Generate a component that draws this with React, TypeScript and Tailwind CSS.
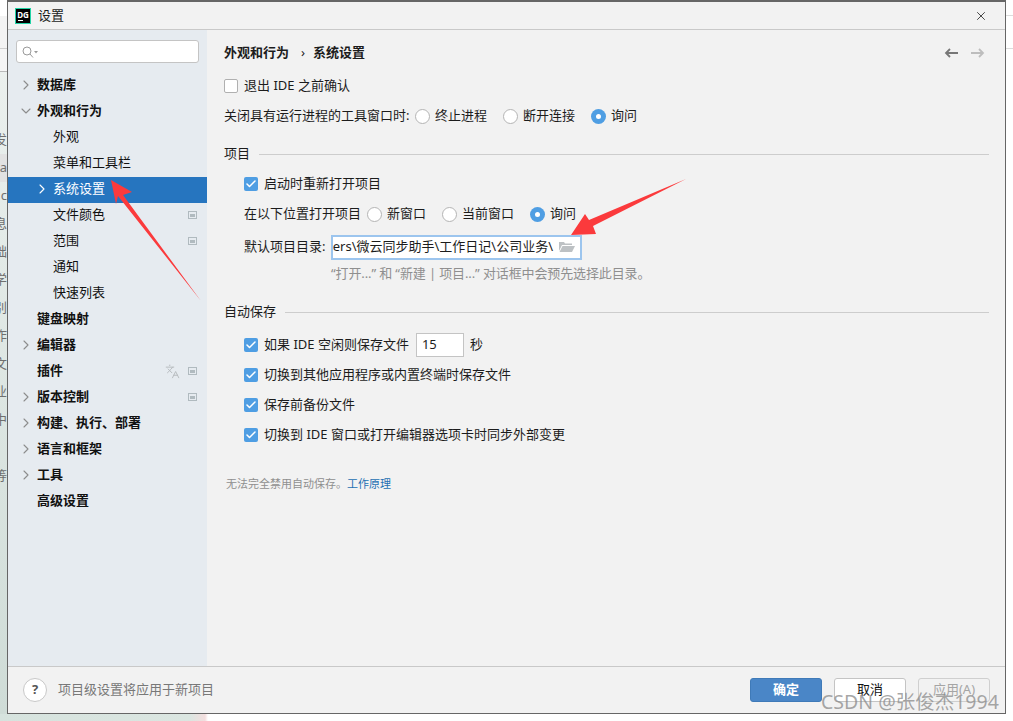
import { Check, ChevronDown, ChevronRight, Languages, X } from "lucide-react";

const stripChars = ["发", "ta", "c", "息", "础", "学", "别", "作", "文", "业", "中", "", "等"];

const tree = [
  { label: "数据库", root: true, arrow: "right" },
  { label: "外观和行为", root: true, arrow: "down" },
  { label: "外观" },
  { label: "菜单和工具栏" },
  { label: "系统设置", selected: true, arrow: "right" },
  { label: "文件颜色", scope: true },
  { label: "范围", scope: true },
  { label: "通知" },
  { label: "快速列表" },
  { label: "键盘映射", root: true },
  { label: "编辑器", root: true, arrow: "right" },
  { label: "插件", root: true, scope: true, lang: true },
  { label: "版本控制", root: true, arrow: "right", scope: true },
  { label: "构建、执行、部署", root: true, arrow: "right" },
  { label: "语言和框架", root: true, arrow: "right" },
  { label: "工具", root: true, arrow: "right" },
  { label: "高级设置", root: true },
];

function TreeRow({ item }: { item: (typeof tree)[number] }) {
  const iconColor = item.selected ? "text-white" : "text-[#8c8c8c]";
  return (
    <div className={`relative flex h-[26px] items-center ${item.selected ? "bg-[#2675bf] text-white" : "text-[#111]"}`}>
      {item.arrow && (
        <span className={`absolute top-[4px] ${item.root ? "left-[10px]" : "left-[26px]"} ${iconColor}`}>
          {item.arrow === "down" ? <ChevronDown size={16} strokeWidth={1.6} /> : <ChevronRight size={16} strokeWidth={1.6} />}
        </span>
      )}
      <span className={item.root ? "ml-[29px] pb-[2px] font-bold" : "ml-[45px] pb-[2px]"}>{item.label}</span>
      {item.lang && <Languages size={15} strokeWidth={1.5} className="absolute left-[157px] top-[5px] text-[#b5babd]" />}
      {item.scope && (
        <span className="absolute left-[180px] top-[8px] flex h-[8px] w-[9px] items-center justify-center border border-[#b0babf]">
          <span className="h-[3px] w-[5px] bg-[#b0babf]" />
        </span>
      )}
    </div>
  );
}

function Box({ checked }: { checked?: boolean }) {
  return checked ? (
    <span className="flex h-[14px] w-[14px] shrink-0 items-center justify-center rounded-[2px] bg-[#4f9ee3]">
      <Check size={12} strokeWidth={3} className="text-white" />
    </span>
  ) : (
    <span className="h-[14px] w-[14px] shrink-0 rounded-[2px] border border-[#b0b0b0] bg-white" />
  );
}

function Radio({ label, on, className }: { label: string; on?: boolean; className?: string }) {
  return (
    <span className={`flex items-center gap-[5px] ${className ?? ""}`}>
      {on ? (
        <span className="flex h-[15px] w-[15px] items-center justify-center rounded-full bg-[#4f9ee3]">
          <span className="h-[5px] w-[5px] rounded-full bg-white" />
        </span>
      ) : (
        <span className="h-[15px] w-[15px] rounded-full border border-[#b4b4b4] bg-white" />
      )}
      {label}
    </span>
  );
}

function Section({ title }: { title: string }) {
  return (
    <div className="flex h-[30px] items-center gap-[9px]">
      <span>{title}</span>
      <span className="h-px flex-1 bg-[#cdcdcd]" />
    </div>
  );
}

function CheckRow({ label, checked }: { label: string; checked?: boolean }) {
  return (
    <div className="flex h-[30px] items-center gap-[6px] pl-[20px]">
      <Box checked={checked} />
      <span>{label}</span>
    </div>
  );
}

export default function App() {
  return (
    <div className="relative flex h-[721px] w-[1013px] flex-col overflow-hidden bg-white font-['Noto_Sans','Noto_Sans_CJK_SC',sans-serif] text-[13px] text-[#1c1c1c]">
      <div className="flex h-[714px]">
        {/* behind the dialog, left */}
        <div className="flex w-[7px] shrink-0 flex-col overflow-hidden bg-gradient-to-b from-[#eef2f0] to-[#cfdcd7] text-[#6f6f6f]">
          <div className="h-[16px] bg-white" />
          <div className="h-[33px] border-b border-[#cfcfcf] bg-[#f3f3f3]" />
          <div className="h-[23px] border-b border-[#b9b9b9] bg-[#f5f5f5]" />
          <div className="h-[54px]" />
          {stripChars.map((c, i) => (
            <div key={i} className={`flex h-[28px] items-center justify-end whitespace-nowrap ${i === 1 ? "bg-[#e2e2e2]" : ""}`}>
              {c}
            </div>
          ))}
        </div>

        {/* dialog */}
        <div className="flex w-[999px] shrink-0 flex-col border border-t-2 border-[#666] bg-[#f2f2f2]">
          <div className="flex h-[28px] shrink-0 items-center border-b border-[#c9c9c9] pl-[7px] pr-[17px]">
            <span className="flex h-[16px] w-[16px] flex-col items-center border border-[#22d3a5] bg-black pt-px text-[8px] font-bold leading-[9px] text-white">
              DG
              <span className="ml-[-5px] mt-px h-px w-[5px] bg-white" />
            </span>
            <span className="ml-[7px] flex-1">设置</span>
            <X size={14} strokeWidth={1.4} className="text-[#222]" />
          </div>

          <div className="flex min-h-0 flex-1">
            <div className="w-[199px] shrink-0 bg-[#e6ebf0]">
              <div className="mx-[8px] mt-[10px] mb-[10px] flex h-[23px] items-center rounded-[3px] border border-[#c4c4c4] bg-white pl-[5px]">
                <svg width="16" height="12" viewBox="0 0 16 12" fill="none">
                  <circle cx="5" cy="5" r="4" stroke="#9a9a9a" />
                  <path d="M8 8l3 3.5" stroke="#9a9a9a" />
                  <path d="M12 5h4l-2 2.500z" fill="#9a9a9a" />
                </svg>
              </div>
              {tree.map((item) => (
                <TreeRow key={item.label} item={item} />
              ))}
            </div>

            <div className="flex-1 pl-[17px] pr-[16px] pt-[12px]">
              <div className="flex h-[22px] items-center font-bold">
                <span>外观和行为</span>
                <span className="ml-[12px] mr-[8px] font-normal">›</span>
                <span>系统设置</span>
                <span className="ml-auto flex gap-[13px] pr-[4px]">
                  <svg width="14" height="10" viewBox="0 0 14 10" fill="none" stroke="#777" strokeWidth="1.800">
                    <path d="M14 5H2M6 1L2 5l4 4" />
                  </svg>
                  <svg width="14" height="10" viewBox="0 0 14 10" fill="none" stroke="#bdbdbd" strokeWidth="1.800">
                    <path d="M0 5h12M8 1l4 4-4 4" />
                  </svg>
                </span>
              </div>

              <div className="mt-[7px] flex h-[30px] items-center gap-[6px]">
                <Box />
                <span>退出 IDE 之前确认</span>
              </div>
              <div className="flex h-[30px] items-center">
                <span className="w-[191px]">关闭具有运行进程的工具窗口时:</span>
                <Radio label="终止进程" className="w-[88px]" />
                <Radio label="断开连接" className="w-[88px]" />
                <Radio label="询问" on />
              </div>

              <div className="mt-[8px]">
                <Section title="项目" />
              </div>
              <CheckRow label="启动时重新打开项目" checked />
              <div className="flex h-[30px] items-center pl-[20px]">
                <span className="w-[123px]">在以下位置打开项目</span>
                <Radio label="新窗口" className="w-[75px]" />
                <Radio label="当前窗口" className="w-[88px]" />
                <Radio label="询问" on />
              </div>
              <div className="mt-[3px] flex h-[30px] items-center pl-[20px]">
                <span className="w-[87px]">默认项目目录:</span>
                <div className="flex h-[25px] w-[251px] items-center border-2 border-[#9cc5ee] bg-white pr-[5px]">
                  <div className="flex min-w-0 flex-1 justify-end overflow-hidden whitespace-nowrap pr-[4px]">
                    C:\Users\微云同步助手\工作日记\公司业务\
                  </div>
                  <svg width="16" height="12" viewBox="0 0 16 12" className="ml-[2px] shrink-0" fill="#bdc1c4">
                    <path d="M0 1h5l1 1.500h7V4H3L0 10z" />
                    <path d="M3.500 5H16l-3 6H0.500z" />
                  </svg>
                </div>
              </div>
              <div className="flex h-[24px] items-center pl-[107px] tracking-[-0.12px] text-[#8f8f8f]">
                “打开...” 和 “新建 | 项目...” 对话框中会预先选择此目录。
              </div>

              <div className="mt-[11px]">
                <Section title="自动保存" />
              </div>
              <div className="mt-[3px] flex h-[30px] items-center gap-[6px] pl-[20px]">
                <Box checked />
                <span>如果 IDE 空闲则保存文件</span>
                <span className="ml-[1px] flex h-[24px] w-[48px] items-center border border-[#c4c4c4] bg-white pl-[5px]">15</span>
                <span>秒</span>
              </div>
              <CheckRow label="切换到其他应用程序或内置终端时保存文件" checked />
              <CheckRow label="保存前备份文件" checked />
              <CheckRow label="切换到 IDE 窗口或打开编辑器选项卡时同步外部变更" checked />
              <div className="mt-[25px] pl-[2px] text-[11px] leading-[18px] text-[#8f8f8f]">
                无法完全禁用自动保存。<span className="text-[#2470b3]">工作原理</span>
              </div>
            </div>
          </div>

          <div className="flex h-[47px] shrink-0 items-center border-t border-[#c9c9c9] pl-[15px] pr-[15px]">
            <span className="flex h-[24px] w-[24px] items-center justify-center rounded-full border border-[#c8c8c8] bg-white font-bold text-[#555]">?</span>
            <span className="ml-[11px] flex-1 text-[#787878]">项目级设置将应用于新项目</span>
            <span className="flex h-[24px] w-[72px] items-center justify-center rounded-[3px] border border-[#3f7ab8] bg-[#4a86c7] font-bold text-white">确定</span>
            <span className="ml-[12px] flex h-[24px] w-[72px] items-center justify-center rounded-[3px] border border-[#c4c4c4] bg-white text-[#111]">取消</span>
            <span className="ml-[12px] flex h-[24px] w-[72px] items-center justify-center rounded-[3px] border border-[#cfcfcf] text-[#a5a5a5]">应用(A)</span>
          </div>
        </div>

        {/* behind the dialog, right */}
        <div className="w-[7px] shrink-0 bg-white">
          <div className="h-[16px] border-b border-[#dcdcdc]" />
          <div className="h-[33px] border-b border-[#dcdcdc]" />
        </div>
      </div>
      <div className="h-[7px] bg-[linear-gradient(to_right,#d6e3de_0px,#dbe6e1_190px,#f3dede_205px,#ffffff_208px)]" />

      {/* red annotation arrows */}
      <svg className="absolute left-0 top-0" width="1013" height="721" fill="#fb3a3c">
        <polygon points="111,180 132,192 123,195 201,301 118,196 116,204" />
        <polygon points="571,235 585,214 589,220 686,179 593,226 596,234" />
      </svg>

      <div className="absolute left-[821px] top-[690px] text-[19.5px] leading-[24px] whitespace-nowrap text-[#8a8a8a]/75">
        CSDN @张俊杰1994
      </div>
    </div>
  );
}
